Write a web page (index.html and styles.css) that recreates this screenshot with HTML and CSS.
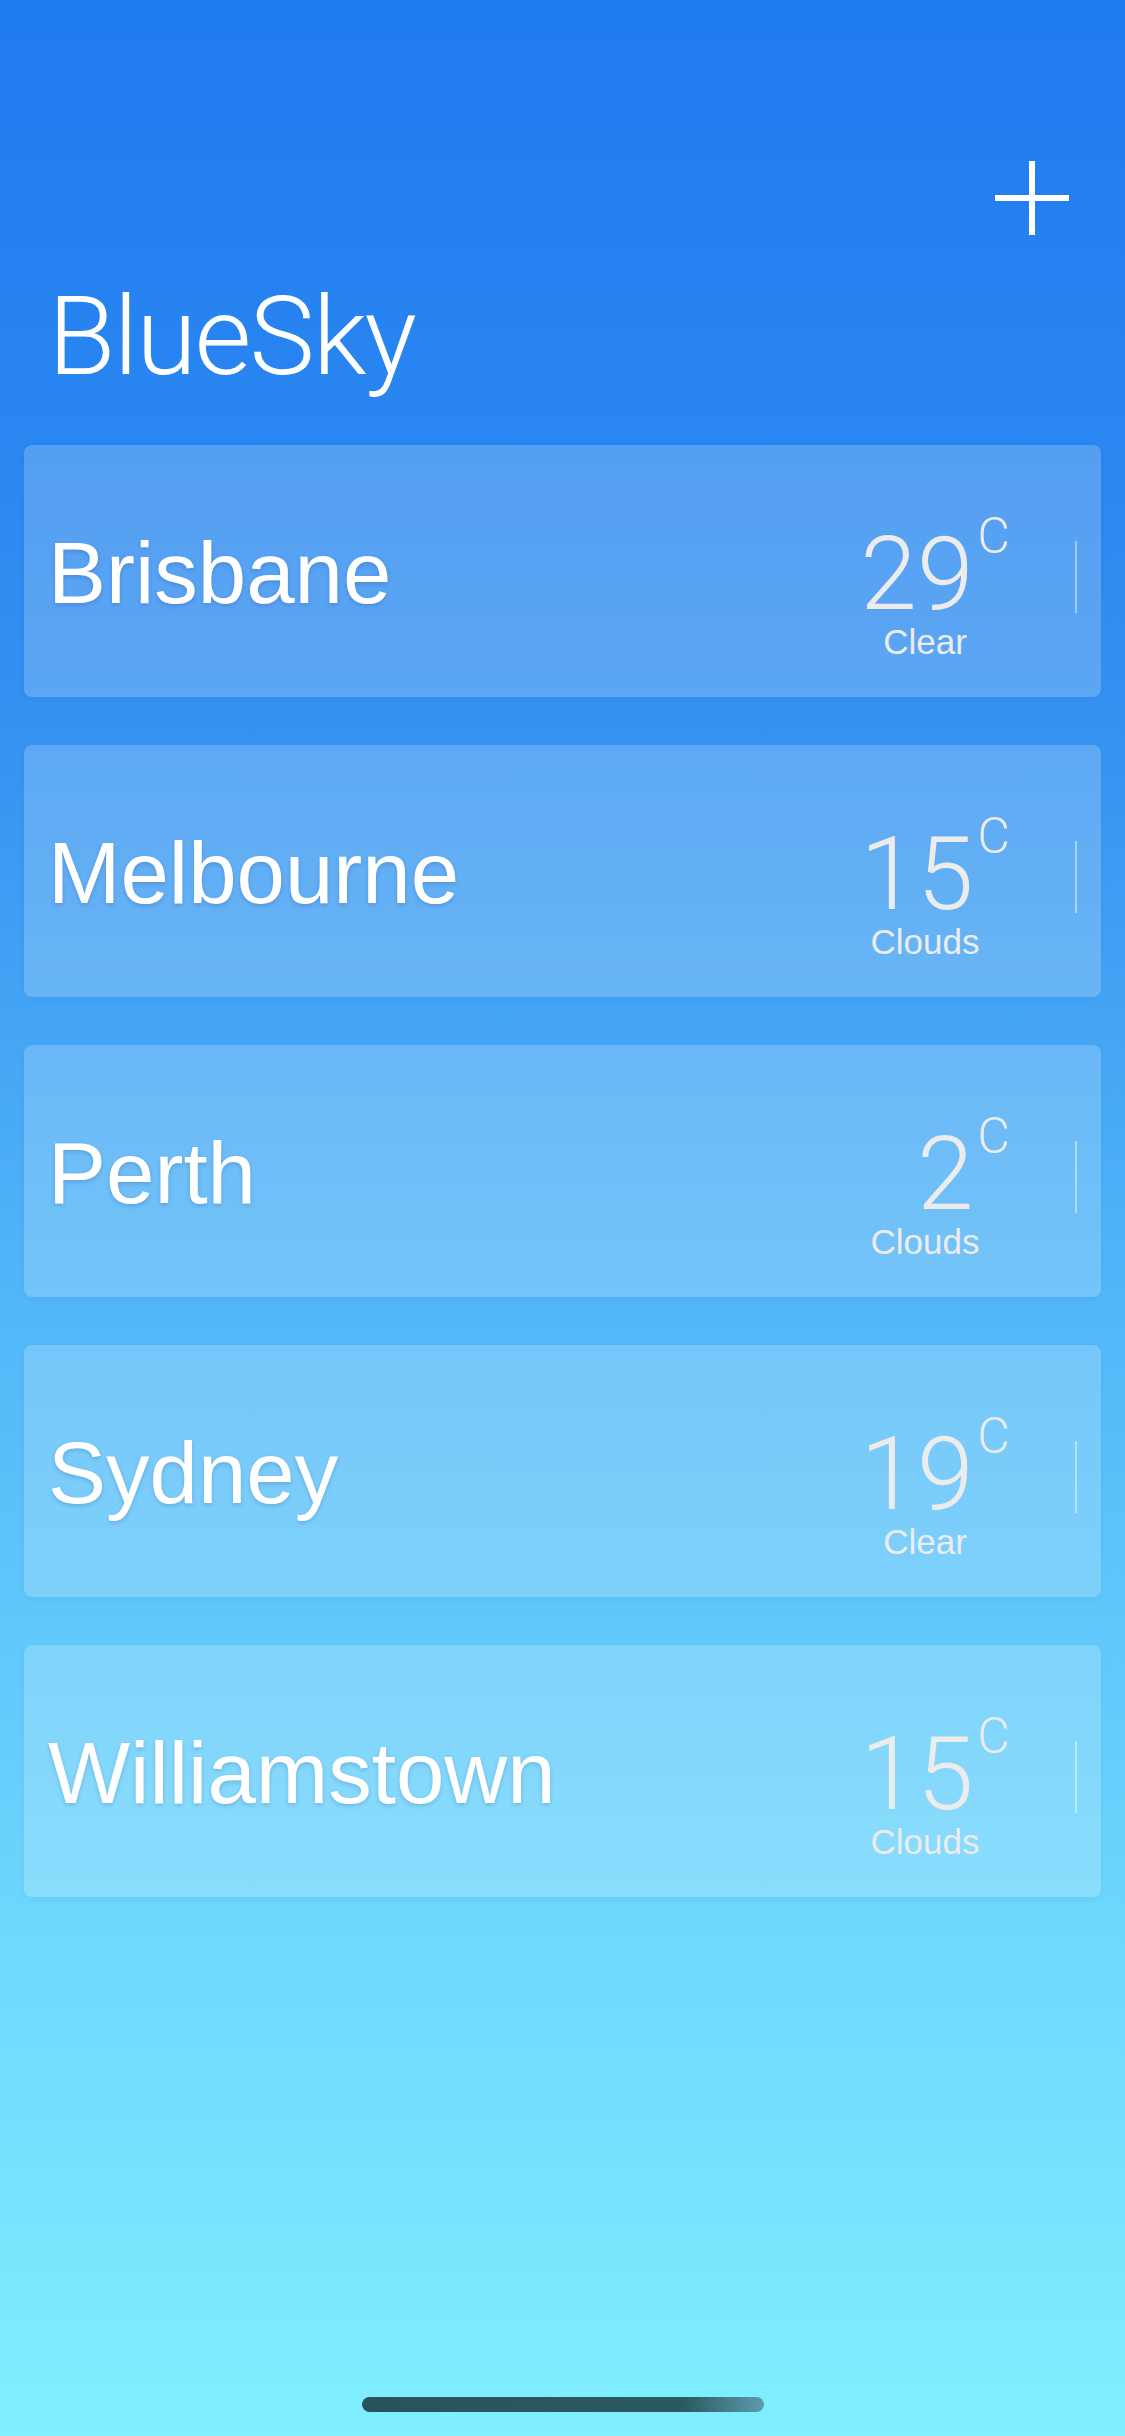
FILE: index.html
```html
<!DOCTYPE html>
<html lang="en">
<head>
<meta charset="utf-8">
<title>BlueSky</title>
<link rel="stylesheet" href="styles.css">
</head>
<body>
<div class="app">
  <header class="top">
    <button class="add" aria-label="Add city">
      <svg width="74" height="74" viewBox="0 0 74 74" aria-hidden="true">
        <line x1="37" y1="0" x2="37" y2="74" stroke="#ffffff" stroke-width="6"/>
        <line x1="0" y1="37" x2="74" y2="37" stroke="#ffffff" stroke-width="6"/>
      </svg>
    </button>
  </header>
  <h1 class="title">BlueSky</h1>
  <ul class="cities">
    <li class="card">
      <span class="city">Brisbane</span>
      <div class="weather">
        <div class="temp">29<span class="unit">C</span></div>
        <div class="desc">Clear</div>
      </div>
      <span class="divider"></span>
    </li>
    <li class="card">
      <span class="city">Melbourne</span>
      <div class="weather">
        <div class="temp">15<span class="unit">C</span></div>
        <div class="desc">Clouds</div>
      </div>
      <span class="divider"></span>
    </li>
    <li class="card">
      <span class="city">Perth</span>
      <div class="weather">
        <div class="temp">2<span class="unit">C</span></div>
        <div class="desc">Clouds</div>
      </div>
      <span class="divider"></span>
    </li>
    <li class="card">
      <span class="city">Sydney</span>
      <div class="weather">
        <div class="temp">19<span class="unit">C</span></div>
        <div class="desc">Clear</div>
      </div>
      <span class="divider"></span>
    </li>
    <li class="card">
      <span class="city">Williamstown</span>
      <div class="weather">
        <div class="temp">15<span class="unit">C</span></div>
        <div class="desc">Clouds</div>
      </div>
      <span class="divider"></span>
    </li>
  </ul>
  <div class="home-indicator"></div>
</div>
</body>
</html>
```

FILE: styles.css
```css
* {
  box-sizing: border-box;
}

html, body {
  margin: 0;
  padding: 0;
}

body {
  width: 1125px;
  height: 2436px;
  overflow: hidden;
  font-family: "Liberation Sans", Arial, sans-serif;
  color: #ffffff;
  background: linear-gradient(to bottom,
    #1f7bf0 0%,
    #2a86f0 18%,
    #3592f1 30%,
    #51b6f8 53%,
    #6ed8fd 80%,
    #80efff 100%);
}

.app {
  height: 2436px;
  display: flex;
  flex-direction: column;
  padding: 0 24px;
}

.top {
  display: flex;
  justify-content: flex-end;
  padding-top: 161px;
  padding-right: 32px;
}

.add {
  display: block;
  width: 74px;
  height: 74px;
  padding: 0;
  margin: 0;
  border: 0;
  background: transparent;
}

.add svg {
  display: block;
}

.title {
  margin: 47px 0 0 0;
  padding-left: 24px;
  font-family: Roboto, "Liberation Sans", sans-serif;
  font-weight: 300;
  font-size: 110px;
  line-height: 110px;
  letter-spacing: -2px;
  color: #ffffff;
}

.cities {
  list-style: none;
  margin: 0;
  padding: 0;
  margin-top: 53px;
  display: flex;
  flex-direction: column;
  gap: 48px;
}

.card {
  height: 252px;
  display: flex;
  align-items: flex-start;
  padding-left: 24px;
  padding-right: 24px;
  border-radius: 8px;
  background: rgba(255, 255, 255, 0.2);
  box-shadow: 0 2px 6px rgba(0, 0, 0, 0.04);
}

.city {
  align-self: center;
  padding-top: 2px;
  font-size: 87px;
  line-height: 87px;
  color: #ffffff;
  text-shadow: 0 2px 4px rgba(0, 40, 100, 0.18);
}

.weather {
  margin-left: auto;
  margin-top: 79px;
  width: 190px;
  display: flex;
  flex-direction: column;
}

.temp {
  font-family: Roboto, "Liberation Sans", sans-serif;
  font-weight: 300;
  font-size: 102px;
  line-height: 100px;
  height: 100px;
  text-align: right;
  padding-right: 10px;
  color: #ececec;
  white-space: nowrap;
}

.unit {
  font-size: 50px;
  line-height: 0;
  vertical-align: 56px;
  margin-left: 4px;
}

.desc {
  font-size: 35px;
  line-height: 35px;
  text-align: center;
  color: #ececec;
}

.divider {
  width: 2px;
  height: 72px;
  margin-top: 96px;
  margin-left: 55px;
  background: rgba(255, 255, 255, 0.45);
}

.home-indicator {
  margin: auto auto 24px auto;
  width: 402px;
  height: 15px;
  border-radius: 8px;
  background: linear-gradient(to right, #27535c 0%, #2b5962 80%, #5d9cab 100%);
}
```
